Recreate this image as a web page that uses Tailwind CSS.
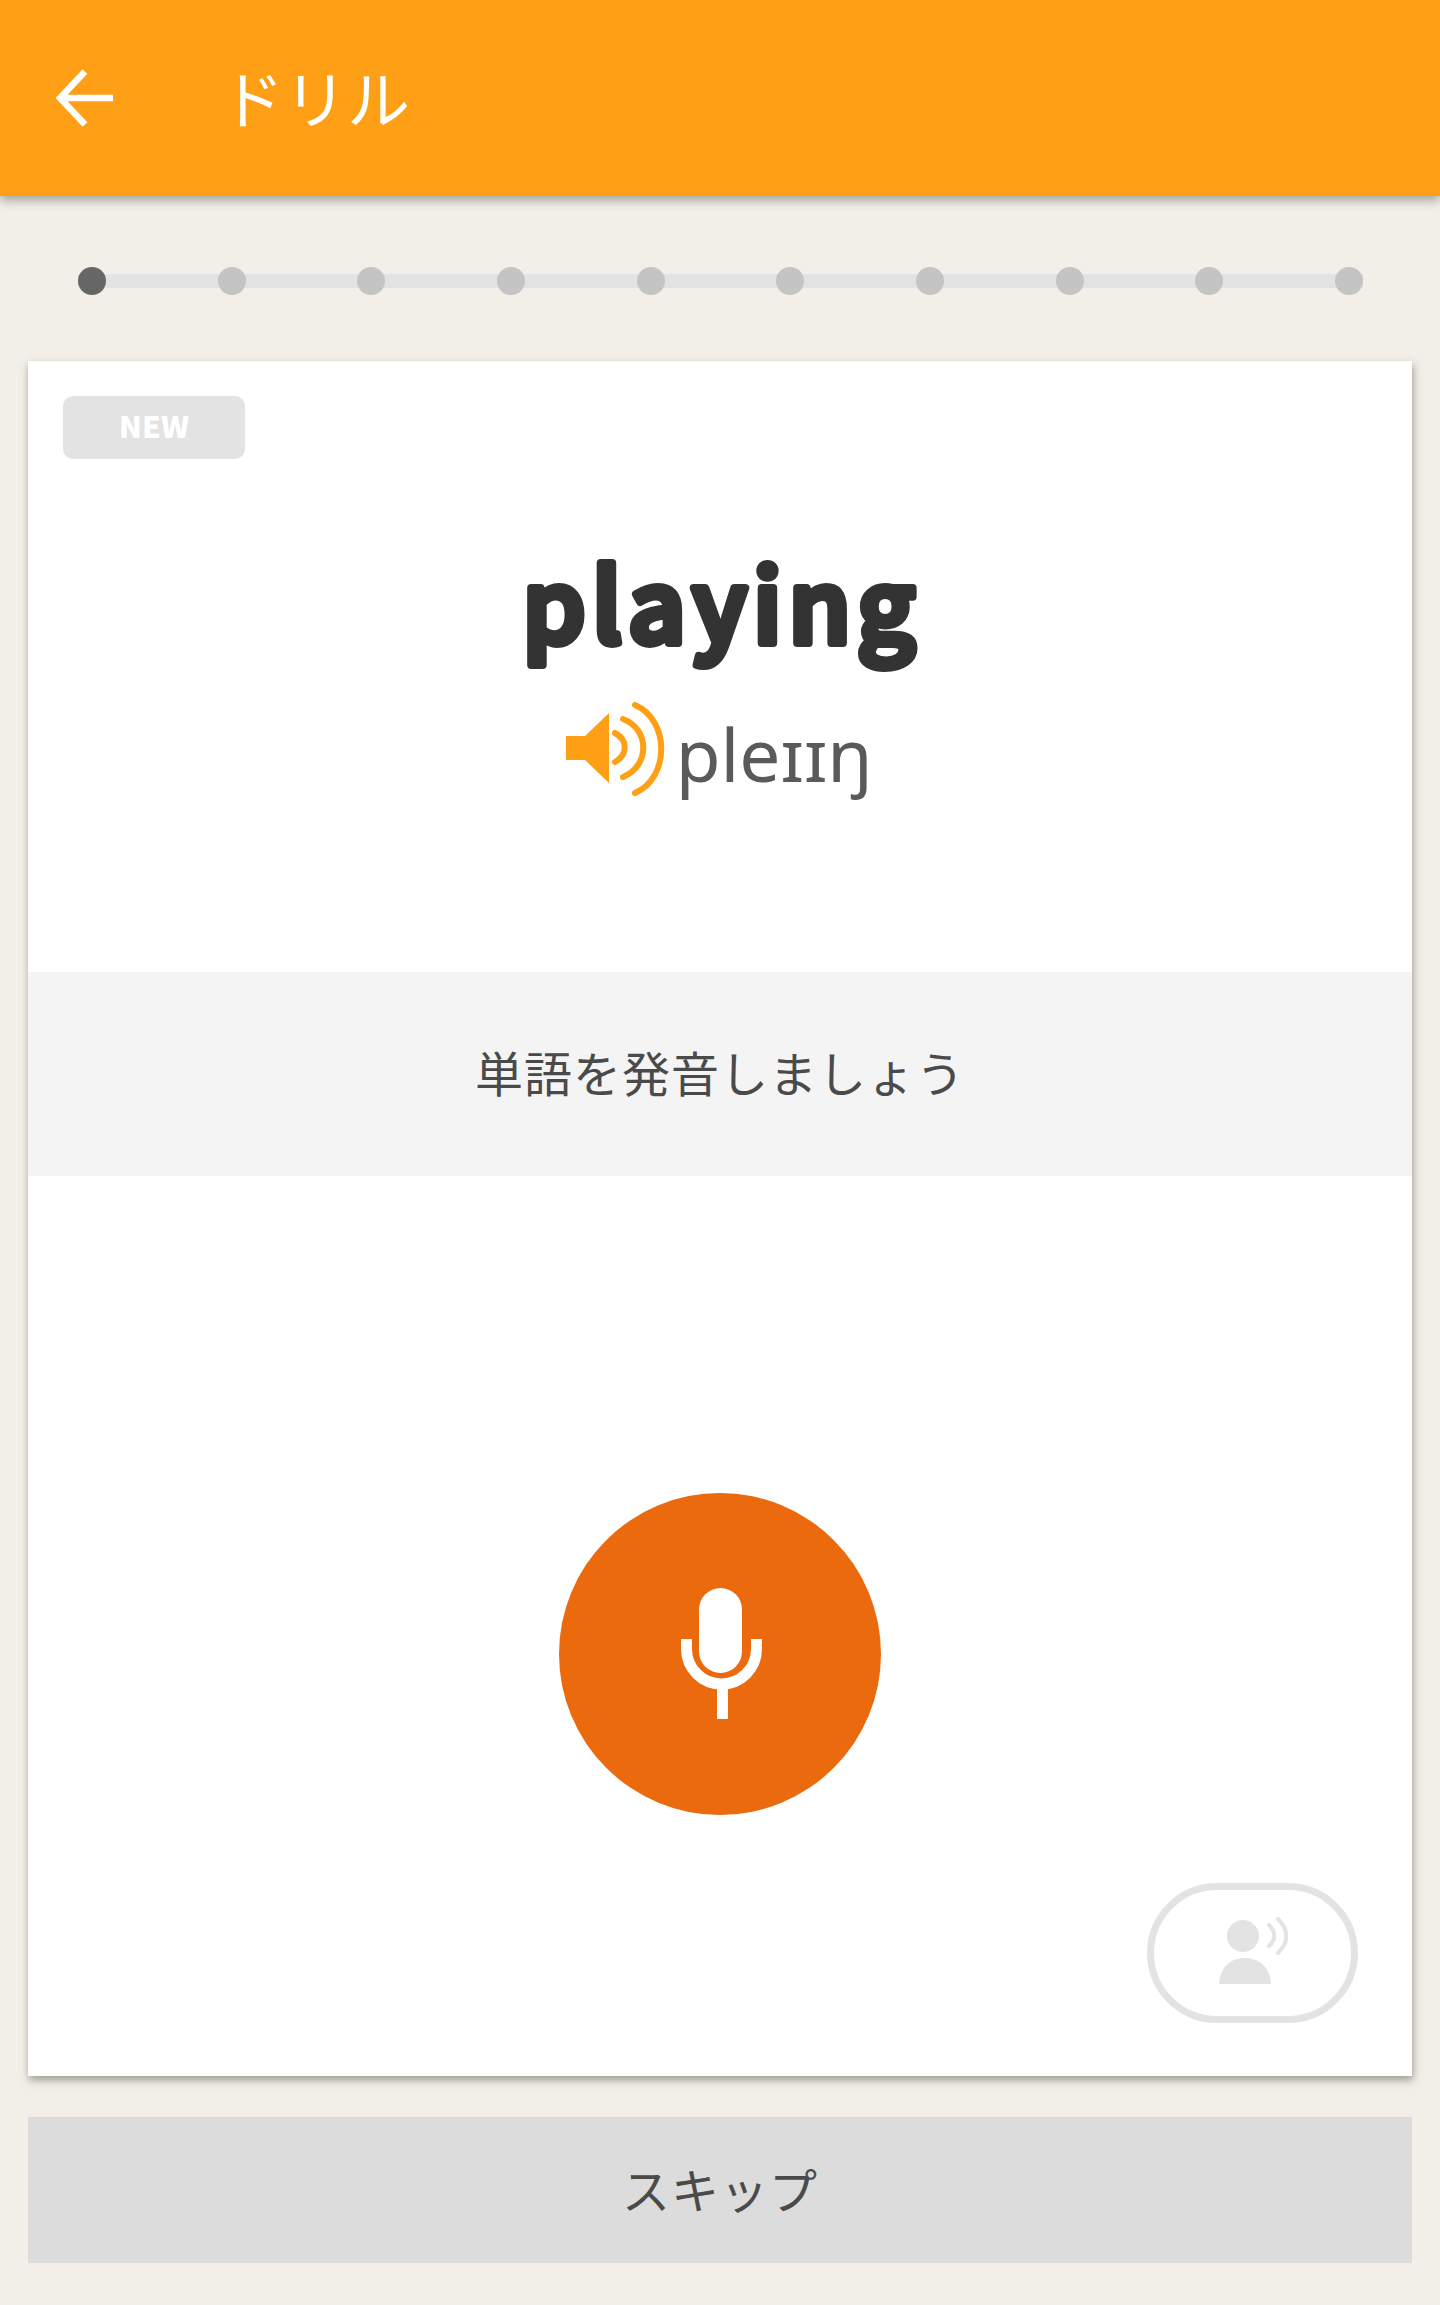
<!DOCTYPE html>
<html lang="ja">
<head>
<meta charset="utf-8">
<script src="https://cdn.jsdelivr.net/npm/@tailwindcss/browser@4"></script>
<title>ドリル</title>
</head>
<body class="m-0 bg-[#f2efe8] font-['Noto_Sans_CJK_JP','Noto_Sans',sans-serif]">
<div class="w-[1440px] h-[2305px] overflow-hidden flex flex-col">
  <header class="relative z-10 h-[196px] shrink-0 bg-[#ff9f15] shadow-[0_4px_10px_rgba(60,60,50,0.45)] flex items-center pl-[56px]">
    <svg class="w-[58px] h-[58px] shrink-0" viewBox="0 0 58 58" fill="none" stroke="#fff" stroke-width="6.5"><path d="M29 2.500 L4 29 L29 55.500 M4 29 H57"/></svg>
    <span class="ml-[107px] text-[63px] leading-none text-white font-normal relative -top-[3px]">ドリル</span>
  </header>

  <div class="h-[165px] shrink-0 pt-[71px] pl-[78px]">
    <div class="relative w-[1285px] h-[28px] flex items-center justify-between">
      <div class="absolute left-0 right-0 top-[7px] h-[14px] bg-[#e3e3e3]"></div>
      <span class="relative w-[28px] h-[28px] rounded-full bg-[#666666]"></span>
      <span class="relative w-[28px] h-[28px] rounded-full bg-[#c4c4c4]"></span>
      <span class="relative w-[28px] h-[28px] rounded-full bg-[#c4c4c4]"></span>
      <span class="relative w-[28px] h-[28px] rounded-full bg-[#c4c4c4]"></span>
      <span class="relative w-[28px] h-[28px] rounded-full bg-[#c4c4c4]"></span>
      <span class="relative w-[28px] h-[28px] rounded-full bg-[#c4c4c4]"></span>
      <span class="relative w-[28px] h-[28px] rounded-full bg-[#c4c4c4]"></span>
      <span class="relative w-[28px] h-[28px] rounded-full bg-[#c4c4c4]"></span>
      <span class="relative w-[28px] h-[28px] rounded-full bg-[#c4c4c4]"></span>
      <span class="relative w-[28px] h-[28px] rounded-full bg-[#c4c4c4]"></span>
    </div>
  </div>

  <main class="relative mx-[28px] h-[1715px] shrink-0 bg-white shadow-[1px_4px_8px_rgba(70,70,60,0.5)] flex flex-col">
    <section class="h-[611px] shrink-0 relative flex flex-col items-center">
      <div class="absolute left-[35px] top-[35px] w-[182px] h-[63px] pb-[6px] rounded-[10px] bg-[#e3e3e3] flex items-center justify-center text-white font-black text-[30px] leading-none">NEW</div>
      <svg class="mt-[173px] ml-[4px] w-[440px] h-[140px] overflow-visible" viewBox="0 0 440 140"><text x="220" y="109" text-anchor="middle" class="text-[100px] font-medium tracking-[6.500px] fill-[#333333] stroke-[#333333] stroke-[8px] [stroke-linejoin:round] [paint-order:stroke_fill]">playing</text></svg>
      <div class="mt-[28px] mr-[2px] flex items-start">
        <svg class="w-[100px] h-[95px] shrink-0" viewBox="0 0 100 95" fill="none"><path d="M0 34 H19 L43 11 V81 L19 58 H0 Z" fill="#ff9f15"/><g stroke="#ff9f15" stroke-width="6" stroke-linecap="round"><path d="M49 31 C62 38 62 52 49 60"/><path d="M57 17 C84 27 84 64 57 75"/><path d="M69 3 C104 18 104 76 69 91"/></g></svg>
        <span class="ml-[10px] mt-[2px] text-[73px] leading-[100px] text-[#5a5a5a] font-['Noto_Sans',sans-serif]">pleɪɪŋ</span>
      </div>
    </section>
    <section class="h-[204px] pb-[6px] shrink-0 bg-[#f4f4f4] flex items-center justify-center text-[48px] leading-none text-[#4a4a4a] tracking-[1px]">単語を発音しましょう</section>
    <section class="relative grow flex justify-center pt-[317px]">
      <div class="w-[322px] h-[322px] rounded-full bg-[#ec6a0e] flex items-center justify-center">
        <svg class="w-[81px] h-[131px] relative left-[1.500px] -top-[1px]" viewBox="0 0 81 131" fill="none"><rect x="18" y="0" width="43" height="85" rx="21.500" fill="#fff"/><path d="M5.500 51 V61 A35 35 0 0 0 75.500 61 V51" stroke="#fff" stroke-width="11"/><path d="M41.500 96 V131" stroke="#fff" stroke-width="11"/></svg>
      </div>
      <div class="absolute left-[1119px] top-[707px] w-[211px] h-[140px] rounded-full border-[7px] border-[#e3e3e3] flex items-center justify-center bg-white">
        <svg class="w-[72px] h-[70px] relative left-[2.500px] -top-[3px]" viewBox="0 0 72 70" fill="none"><circle cx="24" cy="21" r="16" fill="#e3e3e3"/><path d="M0 69 C1 52 12 43 26 43 C40 43 51 52 52 69 Z" fill="#e3e3e3"/><g stroke="#e3e3e3" stroke-width="4" stroke-linecap="round"><path d="M50 10 C57 17 57 25 50 31"/><path d="M59 4 C70 15 70 27 59 38"/></g></svg>
      </div>
    </section>
  </main>

  <button class="mx-[28px] mt-[41px] h-[146px] pb-[4px] shrink-0 bg-[#dcdcdc] flex items-center justify-center text-[48px] leading-none text-[#4a4a4a] tracking-[1px]">スキップ</button>
</div>
</body>
</html>
